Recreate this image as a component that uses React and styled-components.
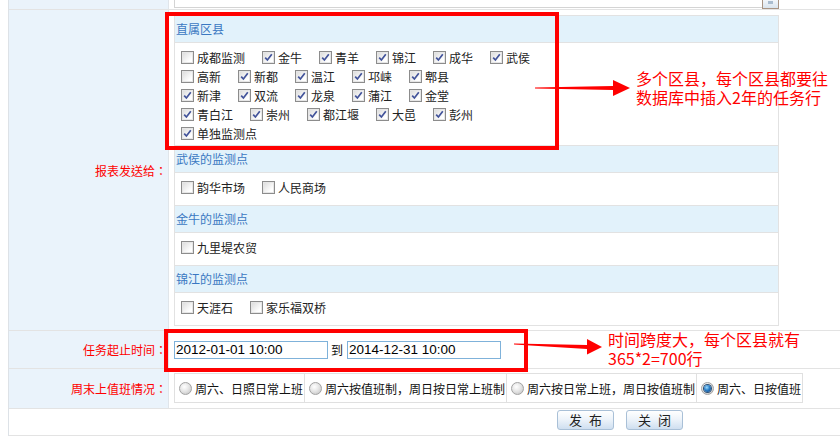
import React from 'react';
import styled, { createGlobalStyle } from 'styled-components';

const Global = createGlobalStyle`
  *, *::before, *::after { box-sizing: border-box; }
  html, body { margin: 0; padding: 0; overflow: hidden; background: #fff; }
  body {
    font-family: "Noto Sans CJK SC", "Microsoft YaHei", sans-serif;
    font-size: 12px;
    color: #222;
  }
`;

const Page = styled.div`
  position: relative;
  width: 840px;
  height: 442px;
  overflow: hidden;
  padding-left: 8px;
`;

const FormTable = styled.div`
  width: 1223px;
  border-left: 1px solid #dde2e7;
  display: flex;
  flex-direction: column;
`;

const Row = styled.div`
  display: grid;
  grid-template-columns: ${p => (p.$full ? '1fr' : '160px 1fr')};
  height: ${p => p.$h + 1}px;
  border-bottom: 1px solid #e3e3e3;
`;

const Label = styled.div`
  background: #eaf3fb;
  border-right: 1px solid #e0e5ea;
  color: #ff0000;
  display: flex;
  align-items: center;
  justify-content: flex-end;
  padding-right: 1px;
  font-family: "Noto Sans CJK TC", "Noto Sans CJK SC", sans-serif;
  font-size: 12px;
`;

const Cell = styled.div`
  display: flex;
  align-items: ${p => p.$align || 'center'};
  padding: ${p => p.$pad || '0 5px'};
  min-width: 0;
`;

const TextareaTail = styled.div`
  display: flex;
  align-items: flex-start;
  width: 605px;
  height: 9px;
`;

const TextareaBox = styled.div`
  flex: 1;
  height: 8px;
  border-left: 1px solid #d4d4d4;
  border-bottom: 1px solid #d4d4d4;
  background: #fff;
`;

const ScrollButton = styled.div`
  width: 17px;
  height: 9px;
  border: 1px solid #a89484;
  border-top: none;
  background: linear-gradient(#f2f6fa, #d9e4ee);
  display: flex;
  justify-content: center;
  align-items: flex-start;
  &::after {
    content: '';
    width: 5px;
    height: 3px;
    margin-top: 1px;
    background: #a9bccf;
  }
`;

const GroupTable = styled.div`
  width: 605px;
  border: 1px solid #e2e2e2;
  display: flex;
  flex-direction: column;
`;

const GroupHeader = styled.div`
  height: 27px;
  border-bottom: 1px solid #e2e2e2;
  background: #e2f2fb;
  color: #3a78c2;
  display: flex;
  align-items: center;
  padding-left: 1px;
  font-size: 12px;
`;

const GroupBody = styled.div`
  height: ${p => p.$h + (p.$last ? 0 : 1)}px;
  border-bottom: ${p => (p.$last ? 'none' : '1px solid #e2e2e2')};
  padding: 5px 6px 0;
  background: #fff;
`;

const CheckRow = styled.div`
  display: flex;
  align-items: center;
  height: 19px;
`;

const CheckItem = styled.label`
  display: flex;
  align-items: center;
  gap: 3px;
  margin-right: 17px;
  color: #222;
  white-space: nowrap;
`;

const CheckBox = styled.span`
  width: 13px;
  height: 13px;
  flex: none;
  border: 1px solid #8c8c8c;
  box-shadow: inset 0 0 0 1px #e6e6e6;
  background: linear-gradient(135deg, #d9d9d9, #ffffff 75%);
  display: flex;
  align-items: center;
  justify-content: center;
`;

const RadioTable = styled.div`
  display: flex;
  height: 30px;
  border: 1px solid #e0e0e0;
`;

const RadioCell = styled.label`
  display: flex;
  align-items: center;
  gap: 3px;
  padding: 0 1px 0 4px;
  color: #111;
  white-space: nowrap;
  & + & { border-left: 1px solid #e0e0e0; }
`;

const RadioDot = styled.span`
  width: 13px;
  height: 13px;
  flex: none;
  border-radius: 50%;
  border: 1px solid #a2a2a2;
  background: radial-gradient(circle at 40% 35%, #ffffff 0%, #e6e6e6 45%, #bdbdbd 100%);
  display: flex;
  align-items: center;
  justify-content: center;
  &::after {
    content: '';
    display: ${p => (p.$on ? 'block' : 'none')};
    width: 7px;
    height: 7px;
    border-radius: 50%;
    background: radial-gradient(circle at 40% 35%, #9fdcff 0%, #2a7fc8 45%, #0d3f7e 100%);
    box-shadow: 0 0 0 1px #2c4f73;
  }
`;

const DateInput = styled.div`
  width: 154px;
  height: 18px;
  border: 1px solid #7fb2da;
  background: #fff;
  font-family: "Liberation Sans", Arial, sans-serif;
  font-size: 13.5px;
  color: #000;
  display: flex;
  align-items: center;
  padding-left: 1px;
`;

const To = styled.span`
  margin: 0 4px 0 3px;
  color: #111;
`;

const ButtonBar = styled.div`
  display: flex;
  justify-content: center;
  align-items: flex-start;
  gap: 12px;
  padding-top: 1px;
`;

const Button = styled.button`
  width: 57px;
  height: 20px;
  border: 1px solid #a9c0d7;
  border-radius: 3px;
  background: linear-gradient(#ffffff, #eef4fa 45%, #cfdff0);
  color: #222;
  font-family: "Noto Sans CJK SC", sans-serif;
  font-size: 13px;
  letter-spacing: 2px;
  padding: 0 0 0 2px;
  line-height: 18px;
`;

const RedBox = styled.div`
  position: absolute;
  left: ${p => p.$x}px;
  top: ${p => p.$y}px;
  width: ${p => p.$w}px;
  height: ${p => p.$h}px;
  border: 4px solid #ff0000;
  pointer-events: none;
`;

const Arrow = styled.svg`
  position: absolute;
  left: ${p => p.$x}px;
  top: ${p => p.$y}px;
  overflow: visible;
`;

const Note = styled.div`
  position: absolute;
  left: ${p => p.$x}px;
  top: ${p => p.$y}px;
  color: #ff0000;
  font-family: "Noto Sans CJK SC", "Microsoft YaHei", sans-serif;
  font-size: 16px;
  line-height: 19px;
  white-space: nowrap;
`;

const Check = ({ on }) => (
  <CheckBox>
    {on ? (
      <svg width="9" height="9" viewBox="0 0 9 9">
        <path d="M1.2 4.6 L3.4 7 L7.8 1.2" fill="none" stroke="#42539a" strokeWidth="1.7" />
      </svg>
    ) : null}
  </CheckBox>
);

const districtRows = [
  [['成都监测', 0], ['金牛', 1], ['青羊', 1], ['锦江', 1], ['成华', 1], ['武侯', 1]],
  [['高新', 0], ['新都', 1], ['温江', 1], ['邛崃', 1], ['郫县', 1]],
  [['新津', 1], ['双流', 1], ['龙泉', 1], ['蒲江', 1], ['金堂', 1]],
  [['青白江', 1], ['崇州', 1], ['都江堰', 1], ['大邑', 1], ['彭州', 1]],
  [['单独监测点', 1]],
];

const groups = [
  { title: '直属区县', rows: districtRows, h: 102 },
  { title: '武侯的监测点', rows: [[['韵华市场', 0], ['人民商场', 0]]], h: 32 },
  { title: '金牛的监测点', rows: [[['九里堤农贸', 0]]], h: 32 },
  { title: '锦江的监测点', rows: [[['天涯石', 0], ['家乐福双桥', 0]]], h: 32 },
];

const radios = [
  ['周六、日照日常上班', false],
  ['周六按值班制，周日按日常上班制', false],
  ['周六按日常上班，周日按值班制', false],
  ['周六、日按值班', true],
];

export default function App() {
  return (
    <Page>
      <Global />
      <FormTable>
        <Row $h={9}>
          <Label />
          <Cell $align="flex-start">
            <TextareaTail>
              <TextareaBox />
              <ScrollButton />
            </TextareaTail>
          </Cell>
        </Row>

        <Row $h={320}>
          <Label>报表发送给：</Label>
          <Cell $pad="0 5px">
            <GroupTable>
              {groups.map((g, gi) => (
                <React.Fragment key={g.title}>
                  <GroupHeader>{g.title}</GroupHeader>
                  <GroupBody $h={g.h} $last={gi === groups.length - 1}>
                    {g.rows.map((r, ri) => (
                      <CheckRow key={ri}>
                        {r.map(([name, on]) => (
                          <CheckItem key={name}>
                            <Check on={on} />
                            {name}
                          </CheckItem>
                        ))}
                      </CheckRow>
                    ))}
                  </GroupBody>
                </React.Fragment>
              ))}
            </GroupTable>
          </Cell>
        </Row>

        <Row $h={37}>
          <Label>任务起止时间：</Label>
          <Cell>
            <DateInput>2012-01-01 10:00</DateInput>
            <To>到</To>
            <DateInput>2014-12-31 10:00</DateInput>
          </Cell>
        </Row>

        <Row $h={39}>
          <Label>周末上值班情况：</Label>
          <Cell $align="flex-start" $pad="4px 5px 0">
            <RadioTable>
              {radios.map(([t, on]) => (
                <RadioCell key={t}>
                  <RadioDot $on={on} />
                  {t}
                </RadioCell>
              ))}
            </RadioTable>
          </Cell>
        </Row>

        <Row $h={26} $full>
          <ButtonBar>
            <Button>发 布</Button>
            <Button>关 闭</Button>
          </ButtonBar>
        </Row>
      </FormTable>

      <RedBox $x={165} $y={12} $w={394} $h={138} />
      <RedBox $x={164} $y={329} $w={364} $h={43} />

      <Arrow $x={533} $y={78} width="100" height="20" viewBox="0 0 100 20">
        <polygon points="2,9.6 80,8 80,2 97,10 80,18 80,12 2,10.4" fill="#ff0000" />
      </Arrow>
      <Arrow $x={512} $y={336} width="92" height="20" viewBox="0 0 92 20">
        <polygon points="2,7.6 75,9 75,3 90,11 75,18.5 75,13 2,8.4" fill="#ff0000" />
      </Arrow>

      <Note $x={636} $y={69}>
        多个区县，每个区县都要往
        <br />
        数据库中插入2年的任务行
      </Note>
      <Note $x={608} $y={330}>
        时间跨度大，每个区县就有
        <br />
        365*2=700行
      </Note>
    </Page>
  );
}
